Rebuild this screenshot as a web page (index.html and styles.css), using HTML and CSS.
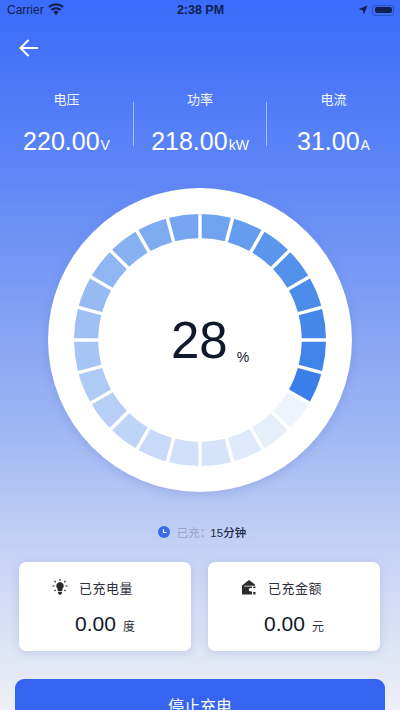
FILE: index.html
```html
<!DOCTYPE html>
<html lang="zh-CN">
<head>
    <meta charset="UTF-8">
    <meta name="viewport" content="width=device-width, initial-scale=1.0">
    <title>充电中</title>
    <link rel="stylesheet" href="styles.css">
</head>
<body>

    <div class="page">
        <div class="status-bar">
            <div class="status-left">
                <span>Carrier</span>
                <svg class="wifi" viewBox="0 0 16 12">
                    <path d="M8 12 5.4 9a3.800 3.800 0 0 1 5.200 0Z" fill="#10204f"/>
                    <path d="M3.400 7a7 7 0 0 1 9.200 0M1 4a10.600 10.600 0 0 1 14 0" fill="none" stroke="#10204f" stroke-width="2.200"/>
                </svg>
            </div>
            <div class="status-time">2:38 PM</div>
            <div class="status-right">
                <svg class="location" viewBox="0 0 10 10">
                    <path d="M9.500.5 5.800 9.500 4.700 5.300.5 4.200Z" fill="#10204f"/>
                </svg>
                <div class="battery"><div class="battery-fill"></div></div>
            </div>
        </div>

        <div class="nav">
            <svg class="back" viewBox="0 0 20 18">
                <path d="M19 9H1.500M9.500 1 1.500 9l8 8" fill="none" stroke="#fff" stroke-width="2"/>
            </svg>
        </div>

        <div class="stats">
            <div class="stat">
                <div class="stat-label">电压</div>
                <div class="stat-value">220.00<small>V</small></div>
            </div>
            <div class="stat">
                <div class="stat-label">功率</div>
                <div class="stat-value">218.00<small>kW</small></div>
            </div>
            <div class="stat">
                <div class="stat-label">电流</div>
                <div class="stat-value">31.00<small>A</small></div>
            </div>
        </div>

        <div class="dial">
            <svg class="dial-ring" viewBox="-126 -126 252 252">
                <defs>
                    <path id="seg" d="M-14.63 -124.14A125 125 0 0 1 14.63 -124.14L11.5 -100.34A101 101 0 0 0 -11.5 -100.34Z"/>
                </defs>
                <use href="#seg" transform="rotate(7.5)" fill="#70a3ef"/>
                <use href="#seg" transform="rotate(22.5)" fill="#659ced"/>
                <use href="#seg" transform="rotate(37.5)" fill="#5b96ec"/>
                <use href="#seg" transform="rotate(52.5)" fill="#5391eb"/>
                <use href="#seg" transform="rotate(67.5)" fill="#4b8cea"/>
                <use href="#seg" transform="rotate(82.5)" fill="#4588ea"/>
                <use href="#seg" transform="rotate(97.5)" fill="#4084ea"/>
                <use href="#seg" transform="rotate(112.5)" fill="#3a7fe9"/>
                <use href="#seg" transform="rotate(127.5)" fill="#eef3fd"/>
                <use href="#seg" transform="rotate(142.5)" fill="#e6eefc"/>
                <use href="#seg" transform="rotate(157.5)" fill="#dee9fb"/>
                <use href="#seg" transform="rotate(172.5)" fill="#d6e4fa"/>
                <use href="#seg" transform="rotate(187.5)" fill="#d0e0f9"/>
                <use href="#seg" transform="rotate(202.5)" fill="#c8daf8"/>
                <use href="#seg" transform="rotate(217.5)" fill="#bfd5f7"/>
                <use href="#seg" transform="rotate(232.5)" fill="#b7cff6"/>
                <use href="#seg" transform="rotate(247.5)" fill="#aecaf5"/>
                <use href="#seg" transform="rotate(262.5)" fill="#a6c4f4"/>
                <use href="#seg" transform="rotate(277.5)" fill="#9fc0f3"/>
                <use href="#seg" transform="rotate(292.5)" fill="#97baf3"/>
                <use href="#seg" transform="rotate(307.5)" fill="#8fb5f2"/>
                <use href="#seg" transform="rotate(322.5)" fill="#87b0f1"/>
                <use href="#seg" transform="rotate(337.5)" fill="#7eabf0"/>
                <use href="#seg" transform="rotate(352.5)" fill="#76a6ef"/>
            </svg>
            <div class="dial-text">28<small>%</small></div>
        </div>

        <div class="charged">
            <svg class="clock" viewBox="0 0 12 12">
                <circle cx="6" cy="6" r="6" fill="#3a6af0"/>
                <path d="M5.500 3v3.500h3" fill="none" stroke="#fff" stroke-width="1.200"/>
            </svg>
            <span class="charged-label">已充：</span>
            <span class="charged-value">15分钟</span>
        </div>

        <div class="cards">
            <div class="card">
                <div class="card-head">
                    <svg class="card-icon" viewBox="0 0 16 16">
                        <path d="M8 3a3.800 3.800 0 0 0-2.400 6.700V12h4.800V9.700A3.800 3.800 0 0 0 8 3Z" fill="#2b2b2b"/>
                        <path d="M6 12.700h4v1.300L8.800 15.700H7.200L6 14Z" fill="#2b2b2b"/>
                        <path d="M8 0v2M2.400 2l1.400 1.400M13.600 2l-1.400 1.400M.5 7h2M13.500 7h2M2.400 12l1.400-1.200M13.600 12l-1.400-1.200" stroke="#2b2b2b" stroke-width="1.100" fill="none"/>
                    </svg>
                    <span>已充电量</span>
                </div>
                <div class="card-value">0.00<small>度</small></div>
            </div>
            <div class="card">
                <div class="card-head">
                    <svg class="card-icon" viewBox="0 0 16 16">
                        <path d="M1 6.500 8 1l6 4.500v1.200H3V15.500H1Z" fill="#2b2b2b"/>
                        <path d="M3 7.500h8V9H9.500a1.800 1.800 0 0 0 0 3.600H11v2.900H3Z" fill="#2b2b2b"/>
                        <path d="M12.300 7.500H14.500V9H12.300ZM12.300 13H14.500v2.500H12.300Z" fill="#2b2b2b"/>
                    </svg>
                    <span>已充金额</span>
                </div>
                <div class="card-value">0.00<small>元</small></div>
            </div>
        </div>

        <button class="stop-btn">停止充电</button>
    </div>

</body>
</html>
```

FILE: styles.css
```css
* {
    margin: 0;
    padding: 0;
    box-sizing: border-box;
}

html, body {
    height: 100%;
    overflow: hidden;
}

body {
    font-family: "Liberation Sans", "Noto Sans CJK SC", sans-serif;
}

.page {
    height: 710px;
    overflow: hidden;
    display: flex;
    flex-direction: column;
    background: linear-gradient(180deg, #3a6bfa 0%, #5f87f6 25%, #a3b9f3 62%, #c6d3f4 78%, #eef0f6 100%);
}

/* status bar */
.status-bar {
    height: 20px;
    flex-shrink: 0;
    display: grid;
    grid-template-columns: 1fr auto 1fr;
    align-items: center;
    padding: 0 6px 0 7px;
    font-size: 12px;
    color: #10204f;
}

.status-left {
    display: flex;
    align-items: center;
    gap: 4px;
}

.wifi {
    width: 16px;
    height: 12px;
    margin-top: -2px;
}

.status-time {
    font-weight: bold;
    font-size: 12.5px;
}

.status-right {
    display: flex;
    justify-content: flex-end;
    align-items: center;
    gap: 4px;
}

.location {
    width: 10px;
    height: 10px;
}

.battery {
    width: 22px;
    height: 11px;
    padding: 1.5px;
    border: 1px solid rgba(16, 32, 79, 0.35);
    border-radius: 3px;
}

.battery-fill {
    height: 100%;
    background: #10204f;
    border-radius: 2px;
}

/* back arrow */
.nav {
    height: 58px;
    flex-shrink: 0;
    padding: 19px 0 0 19px;
}

.back {
    display: block;
    width: 20px;
    height: 18px;
}

/* voltage, power, current */
.stats {
    display: grid;
    grid-template-columns: 134px 133px 133px;
    flex-shrink: 0;
    height: 102px;
    padding-top: 24px;
}

.stat {
    height: 44px;
    text-align: center;
    color: #fff;
    border-right: 1px solid rgba(255, 255, 255, 0.5);
}

.stat:last-child {
    border-right: none;
}

.stat-label {
    font-size: 13px;
    line-height: 18px;
    margin-top: -11px;
    opacity: 0.95;
}

.stat-value {
    margin-top: 17px;
    font-size: 25px;
    line-height: 30px;
    white-space: nowrap;
}

.stat-value small {
    font-size: 14px;
    margin-left: 1px;
}

/* progress dial */
.dial {
    position: relative;
    flex-shrink: 0;
    width: 304px;
    height: 304px;
    margin: 8px auto 0;
    display: flex;
    justify-content: center;
    align-items: center;
    background: #fff;
    border-radius: 50%;
    box-shadow: 0 2px 10px rgba(70, 100, 200, 0.25);
}

.dial-ring {
    width: 254px;
    height: 254px;
}

.dial-text {
    position: absolute;
    top: 123px;
    left: 123px;
    font-size: 51px;
    line-height: 60px;
    color: #10182b;
    white-space: nowrap;
}

.dial-text small {
    font-size: 14px;
    margin-left: 9px;
    vertical-align: -4px;
}

/* charged time */
.charged {
    flex-shrink: 0;
    margin-top: 31px;
    padding-left: 4px;
    height: 18px;
    display: flex;
    justify-content: center;
    align-items: center;
    font-size: 11.5px;
}

.clock {
    width: 12px;
    height: 12px;
    margin-right: 7px;
}

.charged-label {
    color: #9aa3bd;
}

.charged-value {
    margin-left: -1px;
    color: #1d2740;
    font-weight: 500;
}

/* energy and amount cards */
.cards {
    flex-shrink: 0;
    display: grid;
    grid-template-columns: 172px 172px;
    gap: 17px;
    margin: 21px 0 0 19px;
}

.card {
    height: 89px;
    background: #fff;
    border-radius: 7px;
    box-shadow: 0 2px 8px rgba(90, 110, 180, 0.22);
}

.card-head {
    display: flex;
    align-items: center;
    gap: 11px;
    padding: 11px 0 0 33px;
    height: 39px;
    font-size: 13px;
    letter-spacing: 0.5px;
    color: #2b2f3a;
}

.card-icon {
    width: 16px;
    height: 16px;
}

.card-value {
    margin-top: 10px;
    padding-left: 56px;
    font-size: 21px;
    line-height: 26px;
    color: #10182b;
    white-space: nowrap;
}

.card-value small {
    font-size: 12px;
    margin-left: 7px;
    color: #2b2f3a;
}

/* stop button */
.stop-btn {
    flex-shrink: 0;
    display: block;
    width: 370px;
    height: 50px;
    margin: 28px 0 0 15px;
    padding-top: 1px;
    border: none;
    border-radius: 9px;
    background: #3565f0;
    color: #fff;
    font-family: inherit;
    font-size: 16px;
}
```
